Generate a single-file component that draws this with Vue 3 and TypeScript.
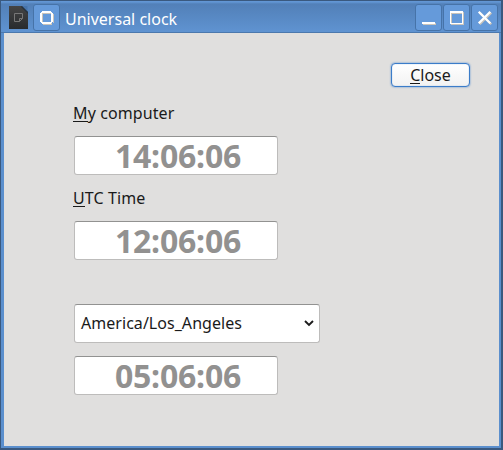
<script setup lang="ts">
import { ref } from 'vue'

interface Clock {
  id: string
  accessKey: string
  label: string
  time: string
}

const clocks: Clock[] = [
  { id: 'local', accessKey: 'M', label: 'y computer', time: '14:06:06' },
  { id: 'utc', accessKey: 'U', label: 'TC Time', time: '12:06:06' },
]
const zone = ref('America/Los_Angeles')
const zoneTime = ref('05:06:06')
</script>

<template>
  <div class="window">
    <header class="titlebar">
      <svg class="doc-icon" width="19" height="23" viewBox="0 0 19 23">
        <defs>
          <linearGradient id="docfill" x1="0" y1="0" x2="0" y2="1">
            <stop offset="0" stop-color="#454545" />
            <stop offset="1" stop-color="#282b2e" />
          </linearGradient>
        </defs>
        <path d="M0 0H13L19 6V23H0Z" fill="url(#docfill)" />
        <path d="M13 0L18.5 5.5V0Z" fill="#4674ac" />
        <path d="M13 0L19 6V8L12 1Z" fill="#26333f" />
        <path d="M5.500 7.500H13.500V12.500L10.500 15.500H5.500ZM10.500 15.500V12.500H13.500" fill="none" stroke="#777" />
      </svg>
      <button class="tool menu" aria-label="Window menu">
        <svg width="26" height="26" viewBox="0 0 26 26" shape-rendering="crispEdges">
          <path d="M8 9H17V10H9V18H8ZM19 10H20V19H18V21H9V20H17V19H19Z" fill="#c9c4bb" />
          <path d="M8 7H17V8H18V9H19V18H18V19H17V20H8V19H7V18H6V9H7V8H8ZM8 9V18H17V9Z" fill="#fff" fill-rule="evenodd" />
        </svg>
      </button>
      <h1 class="title">Universal clock</h1>
      <div class="controls">
        <button class="tool" aria-label="Minimize">
          <svg width="26" height="26" viewBox="0 0 26 26" shape-rendering="crispEdges">
            <path d="M7 19H20V21H7Z" fill="#c9c4bb" />
            <path d="M6 18H19V20H6Z" fill="#fff" />
          </svg>
        </button>
        <button class="tool" aria-label="Maximize">
          <svg width="26" height="26" viewBox="0 0 26 26" shape-rendering="crispEdges">
            <path d="M7 8H20V21H7ZM8 10V20H19V10Z" fill="#c9c4bb" fill-rule="evenodd" />
            <path d="M6 7H19V20H6ZM7 9V19H18V9Z" fill="#fff" fill-rule="evenodd" />
          </svg>
        </button>
        <button class="tool" aria-label="Close window">
          <svg width="26" height="26" viewBox="0 0 26 26">
            <path d="M8.500 9.500L18.500 19.500M18.500 9.500L8.500 19.500" stroke="#c9c4bb" stroke-width="2.200" stroke-linecap="square" />
            <path d="M7.500 8.500L17.500 18.500M17.500 8.500L7.500 18.500" stroke="#fff" stroke-width="2.200" stroke-linecap="square" />
          </svg>
        </button>
      </div>
    </header>
    <main class="content">
      <div class="actions">
        <button class="close"><span class="key">C</span>lose</button>
      </div>
      <div class="clocks">
        <section v-for="clock in clocks" :key="clock.id" class="clock">
          <div class="label"><span class="key">{{ clock.accessKey }}</span>{{ clock.label }}</div>
          <div class="field time">{{ clock.time }}</div>
        </section>
        <div class="field zone">
          <span class="zone-name">{{ zone }}</span>
          <svg width="10" height="8" viewBox="0 0 10 8">
            <path d="M1 1L5 5L9 1" fill="none" stroke="#1c1c1c" stroke-width="1.900" />
          </svg>
        </div>
        <div class="field time">{{ zoneTime }}</div>
      </div>
    </main>
  </div>
</template>

<style>
body {
  margin: 0;
}
</style>

<style scoped>
.window {
  box-sizing: border-box;
  width: 503px;
  height: 450px;
  border: solid #3a597f;
  border-width: 1px 2px 2px 1px;
  background: #5b8fcd;
  padding: 0 2px 2px 3px;
  display: flex;
  flex-direction: column;
  font-family: "Noto Sans", sans-serif;
  font-size: 16px;
  color: #1a1a1a;
}
.titlebar {
  box-sizing: border-box;
  height: 32px;
  flex: none;
  margin: 0 -2px 0 -3px;
  padding: 3px 3px 0 8px;
  display: flex;
  align-items: flex-start;
  background: linear-gradient(#6296d4 0, #6296d4 1px, #5280b8 3px, #5f93d1 31px, #4b78ad 31px);
}
.doc-icon {
  margin-top: 2px;
}
.tool {
  box-sizing: border-box;
  width: 27px;
  height: 27px;
  border: 1px solid #4673a8;
  border-radius: 3px;
  background: #659ada;
  padding: 0;
}
.tool svg {
  display: block;
  margin-top: -1px;
}
.menu {
  margin-left: 5px;
}
.title {
  margin: 4px 0 0 5px;
  font-size: 16px;
  line-height: 22px;
  font-weight: 400;
  color: #fff;
}
.controls {
  margin-left: auto;
  display: flex;
  gap: 1px;
}
.content {
  flex: 1;
  background: #e0dfde;
  padding: 30px 29px 0 70px;
}
.actions {
  display: flex;
  justify-content: flex-end;
}
.close {
  box-sizing: border-box;
  width: 79px;
  height: 24px;
  border: 1px solid #3b7cc9;
  border-radius: 4px;
  background: linear-gradient(#fff, #f2f2f2);
  box-shadow: 0 0 2px #4b88d0, inset 0 0 1px #5b94d6;
  padding: 0;
  font: inherit;
  line-height: 22px;
  color: #1a1a1a;
}
.key {
  box-shadow: inset 0 -1px #1a1a1a;
  display: inline-block;
  line-height: 18px;
}
.clocks {
  display: flex;
  flex-direction: column;
  align-items: flex-start;
  padding-top: 15px;
}
.clock {
  height: 85px;
}
.label {
  height: 34px;
  line-height: 22px;
  margin-left: -1px;
  letter-spacing: 0.1px;
}
.field {
  box-sizing: border-box;
  height: 39px;
  border: 1px solid #bdbcbb;
  border-top-color: #929291;
  border-radius: 3px;
  background: #fff;
}
.time {
  width: 204px;
  text-align: center;
  font-size: 32px;
  line-height: 38px;
  font-weight: 700;
  letter-spacing: -0.2px;
  color: #929190;
  padding-left: 4px;
}
.zone {
  width: 246px;
  margin: 32px 0 13px;
  padding: 0 5px 0 6px;
  display: flex;
  align-items: center;
  justify-content: space-between;
}
.zone-name {
  padding-bottom: 2px;
  letter-spacing: 0.04px;
}
</style>
